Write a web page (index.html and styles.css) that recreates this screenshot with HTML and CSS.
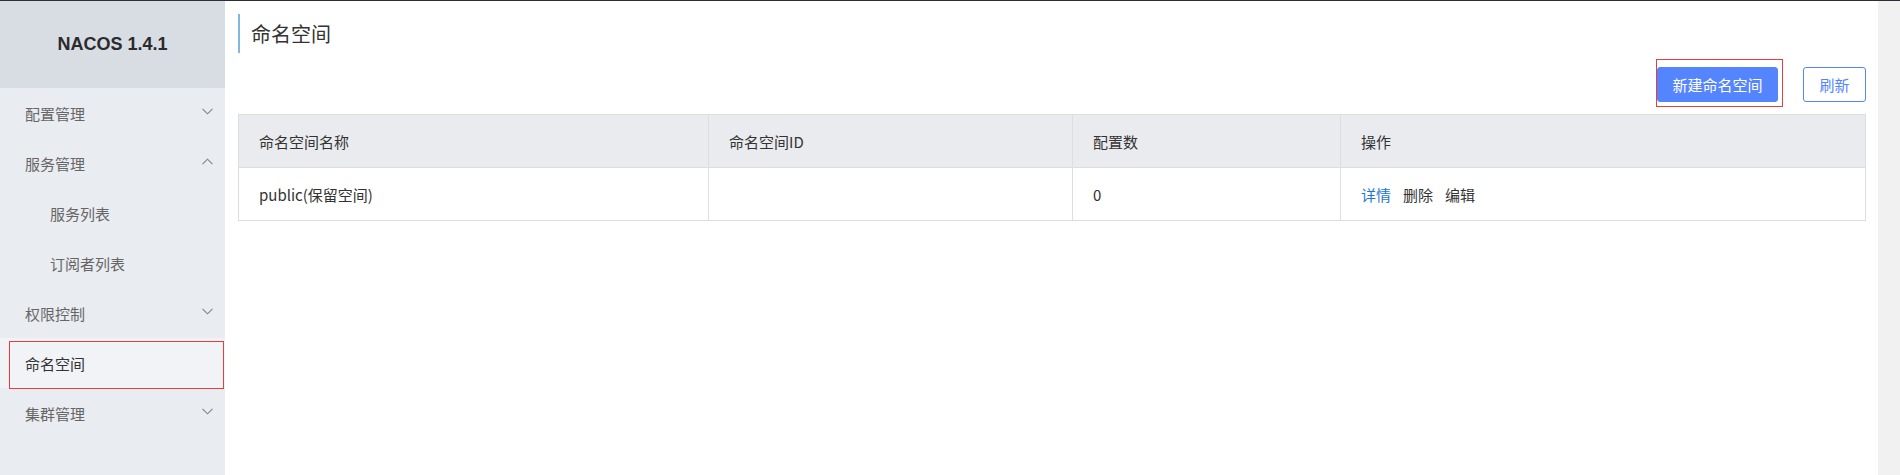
FILE: index.html
```html
<!DOCTYPE html>
<html lang="zh-CN">
<head>
<meta charset="utf-8">
<title>NACOS 命名空间</title>
<link rel="stylesheet" href="styles.css">
</head>
<body>
<div class="topline"></div>
<div class="app">
  <aside class="sidebar">
    <div class="logo">NACOS 1.4.1</div>
    <nav class="menu">
      <div class="item">配置管理<svg class="chev" width="11" height="7" viewBox="0 0 11 7"><polyline points="0.5,0.8 5.5,5.8 10.5,0.8"/></svg></div>
      <div class="item">服务管理<svg class="chev" width="11" height="7" viewBox="0 0 11 7"><polyline points="0.5,6.2 5.5,1.2 10.5,6.2"/></svg></div>
      <div class="item sub">服务列表</div>
      <div class="item sub">订阅者列表</div>
      <div class="item">权限控制<svg class="chev" width="11" height="7" viewBox="0 0 11 7"><polyline points="0.5,0.8 5.5,5.8 10.5,0.8"/></svg></div>
      <div class="item active">命名空间<span class="mark"></span></div>
      <div class="item">集群管理<svg class="chev" width="11" height="7" viewBox="0 0 11 7"><polyline points="0.5,0.8 5.5,5.8 10.5,0.8"/></svg></div>
    </nav>
  </aside>
  <main class="main">
    <h1 class="title">命名空间</h1>
    <div class="toolbar">
      <div class="markbox"><button class="btn primary">新建命名空间</button></div>
      <button class="btn outline">刷新</button>
    </div>
    <table class="grid">
      <colgroup>
        <col class="c1"><col class="c2"><col class="c3"><col class="c4">
      </colgroup>
      <thead>
        <tr><th>命名空间名称</th><th>命名空间ID</th><th>配置数</th><th>操作</th></tr>
      </thead>
      <tbody>
        <tr><td>public(保留空间)</td><td></td><td>0</td><td><a class="link">详情</a><span class="op">删除</span><span class="op">编辑</span></td></tr>
      </tbody>
    </table>
  </main>
  <div class="scrollbar"></div>
</div>
</body>
</html>
```
FILE: styles.css
```css
html, body {
  margin: 0;
  padding: 0;
  height: 100%;
  overflow: hidden;
}
body {
  font-family: "Noto Sans CJK SC", "Noto Sans", sans-serif;
  font-size: 15px;
  color: #333;
  background: #fff;
}
.topline {
  height: 1px;
  background: #2b2f34;
}
.app {
  display: flex;
  height: 474px;
}
.sidebar {
  width: 225px;
  flex: none;
  background: #e9ecf0;
  display: flex;
  flex-direction: column;
}
.logo {
  height: 87px;
  background: #d8dde4;
  display: flex;
  align-items: center;
  justify-content: center;
  font-family: "Liberation Sans", Arial, sans-serif;
  font-weight: bold;
  font-size: 18px;
  color: #2b2b2b;
}
.menu {
  display: flex;
  flex-direction: column;
}
.item {
  position: relative;
  height: 50px;
  display: flex;
  align-items: center;
  padding-left: 25px;
  padding-right: 12px;
  color: #666;
  line-height: 1;
}
.item.sub {
  padding-left: 50px;
}
.item.active {
  background: #f2f3f7;
  color: #333;
}
.chev {
  margin-left: auto;
  margin-top: -4px;
  fill: none;
  stroke: #7d8591;
  stroke-width: 1.1;
}
.mark {
  position: absolute;
  left: 9px;
  right: 1px;
  top: 3px;
  height: 46px;
  border: 1px solid #e53e3e;
}
.main {
  flex: 1;
  min-width: 0;
  padding: 0 12px 0 13px;
  display: flex;
  flex-direction: column;
}
.title {
  margin: 13px 0 0;
  height: 39px;
  line-height: 39px;
  border-left: 2px solid #85b6e3;
  padding-left: 11px;
  font-size: 20px;
  font-weight: normal;
  color: #333;
}
.toolbar {
  margin-top: 6px;
  display: flex;
  justify-content: flex-end;
  align-items: flex-start;
}
.markbox {
  border: 1px solid #e53e3e;
  padding: 7px 4px 4px 0;
  display: flex;
}
.btn {
  height: 35px;
  border-radius: 3px;
  font-family: inherit;
  font-size: 15px;
  line-height: 1;
  padding: 0;
  cursor: pointer;
}
.btn.primary {
  width: 121px;
  background: #5584ff;
  border: 1px solid #5584ff;
  color: #fff;
}
.btn.outline {
  margin-top: 8px;
  margin-left: 20px;
  width: 63px;
  background: #fff;
  border: 1px solid #5584ff;
  color: #5584ff;
}
.grid {
  margin-top: 7px;
  width: 100%;
  border-collapse: collapse;
  table-layout: fixed;
  border: 1px solid #dcdee3;
}
.c1 { width: 470px; }
.c2 { width: 364px; }
.c3 { width: 268px; }
.grid th, .grid td {
  height: 53px;
  padding: 0 0 0 20px;
  text-align: left;
  font-weight: normal;
  color: #333;
  border: 1px solid #dcdee3;
  box-sizing: border-box;
}
.grid th {
  background: #e9ebef;
}
.link {
  color: #1b77d2;
  margin-right: 12px;
}
.op {
  margin-right: 12px;
}
.scrollbar {
  width: 22px;
  flex: none;
  background: #f1f1f1;
}
```
